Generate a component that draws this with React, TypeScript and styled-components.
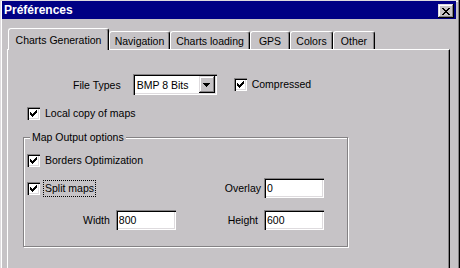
import React, { FC } from 'react';
import styled, { createGlobalStyle } from 'styled-components';

const GlobalStyle = createGlobalStyle`
  html, body {
    margin: 0;
    padding: 0;
    overflow: hidden;
    background: #c6c3c6;
  }
`;

const Window = styled.div`
  width: 460px;
  height: 268px;
  box-sizing: border-box;
  padding: 1px 4px 0 2px;
  display: flex;
  flex-direction: column;
  overflow: hidden;
  background: #c6c3c6;
  font-family: "Liberation Sans", Arial, sans-serif;
  font-size: 10.5px;
  color: #000;
  box-shadow: inset -1px 0 #000, inset -2px 0 #848284, inset 1px 1px #dedbde, inset 2px 2px #fff;
`;

const TitleBar = styled.div`
  height: 18px;
  flex-shrink: 0;
  display: flex;
  justify-content: space-between;
  padding: 0 2px;
  background: #000084;
  color: #fff;
  font-weight: bold;
  font-size: 12px;
`;

const Title = styled.span`
  line-height: 18px;
`;

const CloseButton = styled.div`
  width: 16px;
  height: 14px;
  align-self: flex-end;
  margin-bottom: 1px;
  display: flex;
  align-items: center;
  justify-content: center;
  background: #c6c3c6;
  box-shadow: inset -1px -1px #000, inset 1px 1px #dedbde, inset -2px -2px #848284, inset 2px 2px #fff;
`;

const Body = styled.div`
  flex: 1;
  display: flex;
  flex-direction: column;
  padding: 9px 0 0 5px;
`;

const TabStrip = styled.div`
  height: 21px;
  flex-shrink: 0;
  display: flex;
  align-items: flex-end;
  padding-left: 1px;
`;

const Tab = styled.div<{ $active?: boolean; $w: number }>`
  width: ${p => p.$w}px;
  height: ${p => (p.$active ? 22 : 18)}px;
  margin-bottom: ${p => (p.$active ? -1 : 0)}px;
  position: relative;
  z-index: ${p => (p.$active ? 1 : 0)};
  box-sizing: border-box;
  display: flex;
  align-items: center;
  justify-content: center;
  background: #c6c3c6;
  border-top: 1px solid #fff;
  border-left: 1px solid #fff;
  border-right: 1px solid #000;
  border-radius: 3px 3px 0 0;
  box-shadow: inset -1px 0 #848284;
  white-space: nowrap;
`;

const Panel = styled.div`
  width: 443px;
  flex: 1;
  box-sizing: border-box;
  display: flex;
  flex-direction: column;
  align-items: flex-start;
  border-top: 1px solid #fff;
  border-left: 1px solid #fff;
  border-right: 1px solid #000;
  box-shadow: inset -1px 0 #848284;
`;

const FileRow = styled.div`
  margin-top: 24px;
  padding-left: 65px;
  height: 21px;
  display: flex;
  align-items: center;
`;

const FieldLabel = styled.span`
  white-space: nowrap;
`;

const Select = styled.div`
  width: 84px;
  height: 21px;
  margin-left: 12px;
  margin-right: 17px;
  box-sizing: border-box;
  padding: 2px;
  display: flex;
  align-items: center;
  background: #fff;
  box-shadow: inset 1px 1px #848284, inset 2px 2px #000, inset -1px -1px #fff, inset -2px -2px #dedbde;
`;

const SelectText = styled.span`
  flex: 1;
  padding-left: 2px;
`;

const DropButton = styled.div`
  width: 16px;
  height: 17px;
  display: flex;
  align-items: center;
  justify-content: center;
  background: #c6c3c6;
  box-shadow: inset -1px -1px #000, inset 1px 1px #dedbde, inset -2px -2px #848284, inset 2px 2px #fff;
`;

const CheckRow = styled.div<{ $mt?: number; $pl?: number }>`
  display: flex;
  align-items: center;
  gap: 3px;
  margin-top: ${p => p.$mt ?? 0}px;
  padding-left: ${p => p.$pl ?? 0}px;
`;

const Box = styled.div`
  width: 13px;
  height: 13px;
  flex-shrink: 0;
  display: flex;
  align-items: center;
  justify-content: center;
  background: #fff;
  box-shadow: inset 1px 1px #848284, inset 2px 2px #000, inset -1px -1px #fff, inset -2px -2px #dedbde;
`;

const CheckText = styled.span<{ $focus?: boolean }>`
  padding: 1px;
  line-height: 13px;
  white-space: nowrap;
  border: 1px dotted ${p => (p.$focus ? '#000' : 'transparent')};
`;

const Group = styled.div`
  position: relative;
  margin: 15px 0 0 15px;
  width: 325px;
  height: 110px;
  box-sizing: border-box;
  display: flex;
  flex-direction: column;
  border: 1px solid #848284;
  box-shadow: 1px 1px 0 #fff, inset 1px 1px 0 #fff;
`;

const Legend = styled.span`
  position: absolute;
  top: -7px;
  left: 6px;
  padding: 0 2px;
  line-height: 13px;
  background: #c6c3c6;
  white-space: nowrap;
`;

const GroupRow = styled.div<{ $mt: number; $pl: number }>`
  margin-top: ${p => p.$mt}px;
  padding: 0 23px 0 ${p => p.$pl}px;
  height: 20px;
  display: flex;
  align-items: center;
  justify-content: space-between;
`;

const FieldPair = styled.div<{ $gap: number }>`
  display: flex;
  align-items: center;
  gap: ${p => p.$gap}px;
`;

const TextBox = styled.input`
  width: 60px;
  height: 20px;
  box-sizing: border-box;
  margin: 0;
  padding: 0 3px;
  border: none;
  outline: none;
  background: #fff;
  font-family: "Liberation Sans", Arial, sans-serif;
  font-size: 10.5px;
  color: #000;
  box-shadow: inset 1px 1px #848284, inset 2px 2px #000, inset -1px -1px #fff, inset -2px -2px #dedbde;
`;

const Tick: FC = () => (
  <svg width="7" height="7" viewBox="0 0 7 7" shapeRendering="crispEdges">
    <path
      fill="#000"
      d="M6 0h1v1h-1zM5 1h2v1h-2zM0 2h1v1h-1zM4 2h3v1h-3zM0 3h2v1h-2zM3 3h3v1h-3zM0 4h5v1h-5zM1 5h3v1h-3zM2 6h1v1h-1z"
    />
  </svg>
);

const Check: FC<{ label: string; focus?: boolean; mt?: number; pl?: number }> = props => (
  <CheckRow $mt={props.mt} $pl={props.pl}>
    <Box>
      <Tick />
    </Box>
    <CheckText $focus={props.focus}>{props.label}</CheckText>
  </CheckRow>
);

const tabs = [
  { label: 'Charts Generation', w: 101, active: true },
  { label: 'Navigation', w: 61 },
  { label: 'Charts loading', w: 80 },
  { label: 'GPS', w: 40 },
  { label: 'Colors', w: 43 },
  { label: 'Other', w: 42 },
];

const App: FC = () => {
  return (
    <>
      <GlobalStyle />
      <Window>
        <TitleBar>
          <Title>Préférences</Title>
          <CloseButton>
            <svg width="8" height="7" viewBox="0 0 8 7" shapeRendering="crispEdges">
              <path
                fill="#000"
                d="M0 0h2v1h-2zM6 0h2v1h-2zM1 1h2v1h-2zM5 1h2v1h-2zM2 2h4v1h-4zM3 3h2v1h-2zM2 4h4v1h-4zM1 5h2v1h-2zM5 5h2v1h-2zM0 6h2v1h-2zM6 6h2v1h-2z"
              />
            </svg>
          </CloseButton>
        </TitleBar>
        <Body>
          <TabStrip>
            {tabs.map(t => (
              <Tab key={t.label} $w={t.w} $active={t.active}>
                {t.label}
              </Tab>
            ))}
          </TabStrip>
          <Panel>
            <FileRow>
              <FieldLabel>File Types</FieldLabel>
              <Select>
                <SelectText>BMP 8 Bits</SelectText>
                <DropButton>
                  <svg width="7" height="4" viewBox="0 0 7 4" shapeRendering="crispEdges">
                    <path fill="#000" d="M0 0h7v1h-7zM1 1h5v1h-5zM2 2h3v1h-3zM3 3h1v1h-1z" />
                  </svg>
                </DropButton>
              </Select>
              <Check label="Compressed" />
            </FileRow>
            <Check label="Local copy of maps" mt={10} pl={19} />
            <Group>
              <Legend>Map Output options</Legend>
              <Check label="Borders Optimization" mt={14} pl={3} />
              <GroupRow $mt={9} $pl={3}>
                <Check label="Split maps" focus />
                <FieldPair $gap={3}>
                  <FieldLabel>Overlay</FieldLabel>
                  <TextBox readOnly defaultValue="0" />
                </FieldPair>
              </GroupRow>
              <GroupRow $mt={12} $pl={59}>
                <FieldPair $gap={6}>
                  <FieldLabel>Width</FieldLabel>
                  <TextBox readOnly defaultValue="800" />
                </FieldPair>
                <FieldPair $gap={6}>
                  <FieldLabel>Height</FieldLabel>
                  <TextBox readOnly defaultValue="600" />
                </FieldPair>
              </GroupRow>
            </Group>
          </Panel>
        </Body>
      </Window>
    </>
  );
};

export default App;
